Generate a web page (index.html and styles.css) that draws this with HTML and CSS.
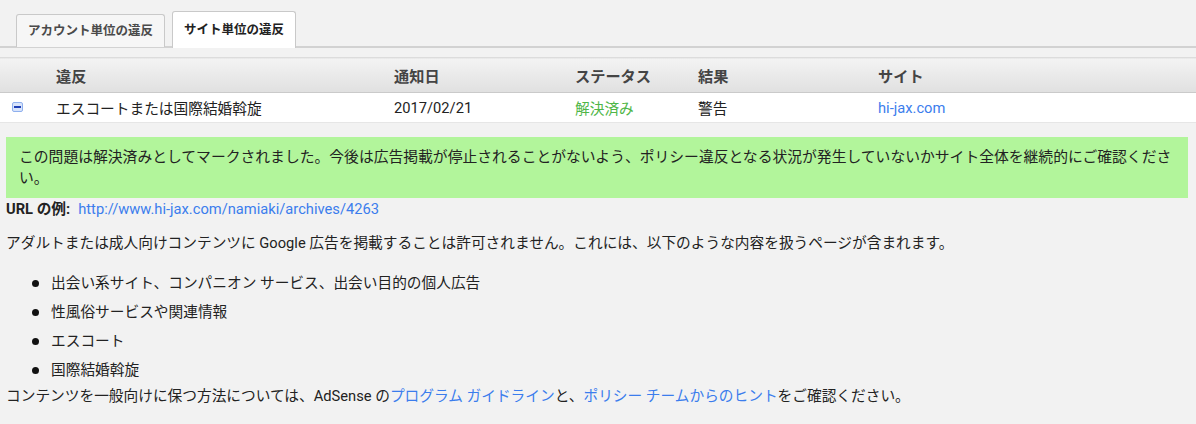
FILE: index.html
```html
<!DOCTYPE html>
<html lang="ja">
<head>
    <meta charset="UTF-8">
    <title>サイト単位の違反</title>
    <link rel="stylesheet" href="styles.css">
</head>
<body>
    <div class="tabs">
        <div class="tab">アカウント単位の違反</div>
        <div class="tab active">サイト単位の違反</div>
    </div>
    <table class="violations">
        <thead>
            <tr>
                <th class="col-icon"></th>
                <th class="col-name">違反</th>
                <th class="col-date">通知日</th>
                <th class="col-status">ステータス</th>
                <th class="col-result">結果</th>
                <th>サイト</th>
            </tr>
        </thead>
        <tbody>
            <tr>
                <td class="col-icon"><span class="collapse"></span></td>
                <td>エスコートまたは国際結婚斡旋</td>
                <td>2017/02/21</td>
                <td class="resolved">解決済み</td>
                <td>警告</td>
                <td><a href="#">hi-jax.com</a></td>
            </tr>
        </tbody>
    </table>
    <div class="detail">
        <div class="notice">この問題は解決済みとしてマークされました。今後は広告掲載が停止されることがないよう、ポリシー違反となる状況が発生していないかサイト全体を継続的にご確認ください。</div>
        <div class="url-line"><b>URL の例:</b><a href="#">http://www.hi-jax.com/namiaki/archives/4263</a></div>
        <p class="intro">アダルトまたは成人向けコンテンツに Google 広告を掲載することは許可されません。これには、以下のような内容を扱うページが含まれます。</p>
        <ul class="items">
            <li>出会い系サイト、コンパニオン サービス、出会い目的の個人広告</li>
            <li>性風俗サービスや関連情報</li>
            <li>エスコート</li>
            <li>国際結婚斡旋</li>
        </ul>
        <p class="outro">コンテンツを一般向けに保つ方法については、AdSense の<a href="#">プログラム ガイドライン</a>と、<a href="#">ポリシー チームからのヒント</a>をご確認ください。</p>
    </div>
</body>
</html>
```

FILE: styles.css
```css
body {
    margin: 0;
    background-color: #f2f2f2;
    color: #222;
    font-family: Roboto, "Noto Sans CJK JP", sans-serif;
    font-size: 14.7px;
}
a {
    color: #3b7ded;
    text-decoration: none;
}
.tabs {
    display: flex;
    align-items: flex-end;
    gap: 7px;
    height: 35px;
    padding: 11px 0 0 16px;
    border-bottom: 2px solid #d2d2d2;
}
.tab {
    height: 33px;
    line-height: 31px;
    padding: 0 11px;
    margin-bottom: -1px;
    background-color: #f6f6f6;
    border: 1px solid #c9c9c9;
    border-bottom: none;
    border-radius: 3px 3px 0 0;
    color: #4a4a4a;
    font-size: 12.5px;
    font-weight: bold;
    box-sizing: border-box;
}
.tab.active {
    height: 37px;
    line-height: 35px;
    margin-bottom: -2px;
    background-color: #fff;
    color: #222;
}
.violations {
    width: 100%;
    margin-top: 9px;
    border-collapse: collapse;
    table-layout: fixed;
}
.violations th {
    height: 34px;
    padding: 0;
    text-align: left;
    font-size: 15.2px;
    font-weight: bold;
    color: #444;
    background: linear-gradient(#f3f3f3, #e0e0e0);
    border-top: 1px solid #dcdcdc;
    border-bottom: 1px solid #cacaca;
}
.violations td {
    height: 29px;
    padding: 0;
    background-color: #fff;
    border-bottom: 1px solid #e6e6e6;
}
.col-icon { width: 56px; }
.col-name { width: 338px; }
.col-date { width: 181px; }
.col-status { width: 123px; }
.col-result { width: 180px; }
.collapse {
    display: block;
    width: 9px;
    height: 8px;
    margin: 0 0 2px 12px;
    background-color: #d8e4fb;
    border: 1px solid #8fb0ee;
    border-radius: 2px;
    position: relative;
}
.collapse::after {
    content: "";
    position: absolute;
    left: 1px;
    right: 1px;
    top: 3px;
    height: 2px;
    background-color: #1f3fb5;
}
.resolved {
    color: #4fb648;
}
.detail {
    padding: 14px 8px 0 6px;
}
.notice {
    padding: 10px 12px 9px 13px;
    background-color: #b2f59b;
    font-size: 14.8px;
    line-height: 21px;
}
.url-line {
    margin-top: 1px;
    line-height: 21px;
}
.url-line b {
    margin-right: 8px;
    font-weight: bold;
}
.intro {
    margin: 13px 0 0;
    line-height: 21px;
}
.items {
    margin: 15px 0 0;
    padding-left: 45px;
    list-style: none;
}
.items li {
    position: relative;
    padding: 4px 0;
    line-height: 21px;
}
.items li::before {
    content: "";
    position: absolute;
    left: -19px;
    top: 11px;
    width: 7px;
    height: 7px;
    border-radius: 50%;
    background-color: #111;
}
.outro {
    margin: 1px 0 0;
    line-height: 21px;
}
```
